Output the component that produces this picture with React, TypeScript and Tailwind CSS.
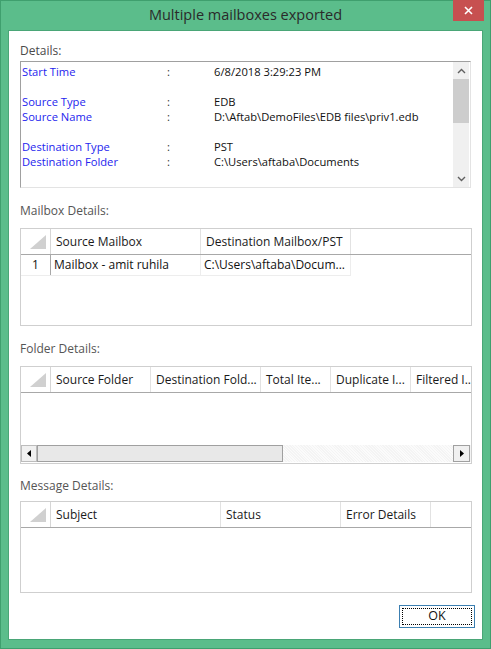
import React from 'react';

const font = { fontFamily: '"Open Sans", "Noto Sans", Arial, sans-serif' };

type Col = { title: string; width: number };

function Corner() {
  return (
    <div className="relative w-[30px] shrink-0 border-r border-[#d6d6d6] h-full">
      <svg className="absolute right-[4px] bottom-[5px]" width="16" height="14" viewBox="0 0 16 14">
        <polygon points="16,0 16,14 0,14" fill="#d0d0d0" />
      </svg>
    </div>
  );
}

function GridHeader({ cols }: { cols: Col[] }) {
  return (
    <div className="flex h-[26px] shrink-0 border-b border-[#a8a8a8]">
      <Corner />
      {cols.map((c) => (
        <div
          key={c.title}
          className="flex shrink-0 items-center overflow-hidden whitespace-nowrap border-r border-[#e2e2e2] pl-[5px] pt-[1px] text-[12px] text-[#1a1a1a]"
          style={{ width: c.width }}
        >
          {c.title}
        </div>
      ))}
    </div>
  );
}

function Label({ children, className = '' }: { children: React.ReactNode; className?: string }) {
  return <div className={`h-[16px] text-[12px] leading-[16px] text-[#4a4a4a] ${className}`}>{children}</div>;
}

const detailRows: [string, string][] = [
  ['Start Time', '6/8/2018 3:29:23 PM'],
  ['', ''],
  ['Source Type', 'EDB'],
  ['Source Name', 'D:\\Aftab\\DemoFiles\\EDB files\\priv1.edb'],
  ['', ''],
  ['Destination Type', 'PST'],
  ['Destination Folder', 'C:\\Users\\aftaba\\Documents'],
  ['', ''],
  ['Source Server', 'Exchange Server'],
];

function DetailsBox() {
  return (
    <div className="flex h-[127px] w-[451px] overflow-hidden border border-t-[#a0a0a0] border-l-[#a0a0a0] border-r-[#e3e3e3] border-b-[#e3e3e3] bg-white">
      <div className="flex-1 overflow-hidden pt-[2px] pl-[1px]">
        {detailRows.map(([k, v], i) => (
          <div key={i} className="flex h-[15px] items-center whitespace-nowrap text-[11.2px] leading-[15px]">
            <div className="w-[145px] text-[#2424ee]">{k}</div>
            <div className="w-[47px] text-[#333]">{k ? ':' : ''}</div>
            <div className="text-[#111]">{v}</div>
          </div>
        ))}
      </div>
      <div className="flex w-[16px] shrink-0 flex-col bg-[#f0f0f0] mr-[1px]">
        <div className="flex h-[17px] items-center justify-center">
          <svg width="9" height="6" viewBox="0 0 9 6">
            <path d="M1 5 L4.5 1.5 L8 5" stroke="#606060" strokeWidth="1.4" fill="none" />
          </svg>
        </div>
        <div className="h-[44px] bg-[#cdcdcd]" />
        <div className="flex-1" />
        <div className="flex h-[17px] items-center justify-center">
          <svg width="9" height="6" viewBox="0 0 9 6">
            <path d="M1 1 L4.5 4.5 L8 1" stroke="#606060" strokeWidth="1.4" fill="none" />
          </svg>
        </div>
      </div>
    </div>
  );
}

function MailboxGrid() {
  const cols = [
    { title: 'Source Mailbox', width: 150 },
    { title: 'Destination Mailbox/PST', width: 150 },
  ];
  return (
    <div className="flex h-[98px] w-[452px] flex-col border border-[#cfcfcf] bg-white">
      <GridHeader cols={cols} />
      <div className="flex h-[21px] shrink-0 border-b border-[#ededed] w-[330px]">
        <div className="flex w-[30px] shrink-0 items-center justify-center border-r border-[#a8a8a8] text-[12px] text-[#111]">
          1
        </div>
        <div className="flex w-[150px] shrink-0 items-center border-r border-[#ededed] pl-[3px] text-[12px] text-[#111] whitespace-nowrap">
          Mailbox - amit ruhila
        </div>
        <div className="flex w-[150px] shrink-0 items-center pl-[3px] text-[12px] text-[#111] whitespace-nowrap border-r border-[#ededed]">
          C:\Users\aftaba\Docum...
        </div>
      </div>
    </div>
  );
}

function FolderGrid() {
  const cols = [
    { title: 'Source Folder', width: 100 },
    { title: 'Destination Fold...', width: 110 },
    { title: 'Total Ite...', width: 70 },
    { title: 'Duplicate I...', width: 80 },
    { title: 'Filtered I..', width: 70 },
  ];
  return (
    <div className="flex h-[98px] w-[452px] flex-col overflow-hidden border border-[#cfcfcf] bg-white">
      <GridHeader cols={cols} />
      <div className="flex-1" />
      <div className="mb-[1px] flex h-[17px] shrink-0 bg-[#f3f3f3]">
        <div className="flex w-[16px] shrink-0 items-center justify-center border border-[#bcbcbc] bg-[#f0f0f0]">
          <svg width="4" height="7" viewBox="0 0 4 7">
            <polygon points="4,0 4,7 0,3.5" fill="#000" />
          </svg>
        </div>
        <div className="w-[246px] shrink-0 border border-[#a0a0a0] bg-[#e8e8e8]" />
        <div className="flex-1 bg-[repeating-linear-gradient(45deg,#f4f4f4_0px,#f4f4f4_1px,#fbfbfb_1px,#fbfbfb_2px)]" />
        <div className="mr-[1px] flex w-[17px] shrink-0 items-center justify-center border border-[#a0a0a0] bg-[#f0f0f0]">
          <svg width="4" height="7" viewBox="0 0 4 7">
            <polygon points="0,0 4,3.5 0,7" fill="#000" />
          </svg>
        </div>
      </div>
    </div>
  );
}

function MessageGrid() {
  const cols = [
    { title: 'Subject', width: 170 },
    { title: 'Status', width: 120 },
    { title: 'Error Details', width: 90 },
  ];
  return (
    <div className="flex h-[92px] w-[452px] flex-col border border-[#cfcfcf] bg-white">
      <GridHeader cols={cols} />
    </div>
  );
}

export default function App() {
  return (
    <div style={font} className="h-[649px] w-[491px] border border-[#3f9f6e] bg-[#5bbd8b] flex flex-col">
      <div className="relative flex h-[29px] shrink-0 items-center justify-center">
        <div className="text-[14.5px] leading-[20px] text-[#2a2a2a] pb-[1px]">Multiple mailboxes exported</div>
        <div className="absolute right-[6px] top-[-1px] flex h-[21px] w-[31px] items-center justify-center bg-[#c75050]">
          <svg width="9" height="9" viewBox="0 0 9 9">
            <path d="M1 1 L8 8 M8 1 L1 8" stroke="#fff" strokeWidth="1.6" />
          </svg>
        </div>
      </div>
      <div className="mx-[7px] flex h-[610px] flex-col border border-[#4aa677] bg-white pl-[11px] pt-[12px]">
        <Label className="mb-[2px]">Details:</Label>
        <DetailsBox />
        <Label className="mt-[15px] mb-[9px] text-[#555]">Mailbox Details:</Label>
        <MailboxGrid />
        <Label className="mt-[15px] mb-[9px] text-[#555]">Folder Details:</Label>
        <FolderGrid />
        <Label className="mt-[14px] mb-[7px] text-[#555]">Message Details:</Label>
        <MessageGrid />
        <div className="mt-[12px] flex justify-end pr-[7px]">
          <div className="flex h-[23px] w-[76px] items-center justify-center border border-[#3c7fb1] bg-white p-[2px]">
            <div className="flex h-full w-full items-center justify-center border border-dotted border-black text-[12.5px] text-[#111]">
              OK
            </div>
          </div>
        </div>
      </div>
    </div>
  );
}
